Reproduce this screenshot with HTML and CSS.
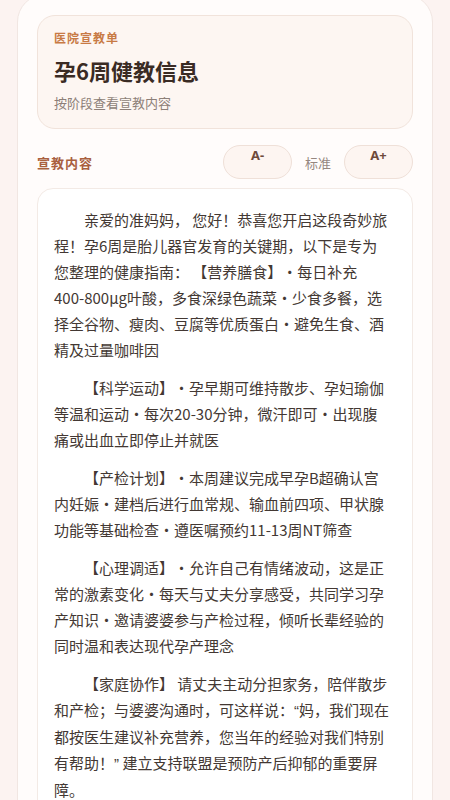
FILE: index.html
```html
<!DOCTYPE html>
<html lang="zh-CN">
<head>
<meta charset="utf-8">
<meta name="viewport" content="width=device-width, initial-scale=1">
<title>孕6周健教信息</title>
<link rel="stylesheet" href="styles.css">
</head>
<body>
<div class="page">
  <div class="shell">
    <header class="hero">
      <div class="hero-label">医院宣教单</div>
      <h1 class="hero-title">孕6周健教信息</h1>
      <div class="hero-sub">按阶段查看宣教内容</div>
    </header>

    <div class="section-row">
      <div class="section-title">宣教内容</div>
      <div class="font-ctrl">
        <span class="pill">A-</span>
        <span class="font-state">标准</span>
        <span class="pill">A+</span>
      </div>
    </div>

    <article class="content">
      <p>亲爱的准妈妈， 您好！恭喜您开启这段奇妙旅程！孕6周是胎儿器官发育的关键期，以下是专为您整理的健康指南： 【营养膳食】・每日补充<span class="nowrap">400-800μg</span>叶酸，多食深绿色蔬菜・少食多餐，选择全谷物、瘦肉、豆腐等优质蛋白・避免生食、酒精及过量咖啡因</p>
      <p>【科学运动】・孕早期可维持散步、孕妇瑜伽等温和运动・每次20-30分钟，微汗即可・出现腹痛或出血立即停止并就医</p>
      <p>【产检计划】・本周建议完成早孕B超确认宫内妊娠・建档后进行血常规、输血前四项、甲状腺功能等基础检查・遵医嘱预约11-13周NT筛查</p>
      <p>【心理调适】・允许自己有情绪波动，这是正常的激素变化・每天与丈夫分享感受，共同学习孕产知识・邀请婆婆参与产检过程，倾听长辈经验的同时温和表达现代孕产理念</p>
      <p>【家庭协作】 请丈夫主动分担家务，陪伴散步和产检；与婆婆沟通时，可这样说：<span class="quote">“</span>妈，我们现在都按医生建议补充营养，您当年的经验对我们特别有帮助！<span class="quote">”</span> 建立支持联盟是预防产后抑郁的重要屏障。</p>
    </article>
  </div>
</div>
</body>
</html>
```

FILE: styles.css
```css
* { box-sizing: border-box; }

html, body {
  margin: 0;
  padding: 0;
  background: #fcf3f1;
}

body {
  font-family: "Noto Sans CJK SC", "Noto Sans", sans-serif;
  color: #3f3430;
  overflow: hidden;
  text-spacing-trim: space-all;
}

.page {
  padding: 0 17px;
}

.shell {
  margin-top: -6px;
  background: #fffcfb;
  border: 1px solid #f1e6e2;
  border-radius: 28px;
  padding: 20px 19px 20px 19px;
  min-height: 900px;
}

.hero {
  background: #fdf6f2;
  border: 1px solid #f1e3db;
  border-radius: 18px;
  padding: 14px 16px 16px 16px;
}

.hero-label {
  font-size: 12px;
  line-height: 16px;
  font-weight: 700;
  letter-spacing: 1px;
  color: #c87a45;
}

.hero-title {
  margin: 10px 0 0 0;
  font-size: 22px;
  line-height: 28px;
  font-weight: 700;
  color: #3a2b24;
}

.hero-sub {
  margin-top: 10px;
  font-size: 13px;
  line-height: 18px;
  color: #8d7f78;
}

.section-row {
  display: flex;
  align-items: center;
  justify-content: space-between;
  margin-top: 16px;
}

.section-title {
  font-size: 13px;
  font-weight: 700;
  letter-spacing: 1px;
  color: #a9603f;
}

.font-ctrl {
  display: flex;
  align-items: center;
  gap: 13px;
}

.pill {
  display: block;
  width: 69px;
  height: 34px;
  border: 1px solid #efe0d8;
  border-radius: 17px;
  background: #fdf5f1;
  text-align: center;
  font-size: 13px;
  line-height: 18px;
  padding-top: 0;
  font-weight: 700;
  color: #6d4a3b;
  font-family: "Noto Sans", "Noto Sans CJK SC", sans-serif;
}

.font-state {
  font-size: 13px;
  color: #958780;
}

.content {
  margin-top: 9px;
  background: #ffffff;
  border: 1px solid #f3eae5;
  border-radius: 16px;
  padding: 18px 20px 18px 16px;
}

.content p {
  margin: 0 0 12px 0;
  font-size: 15px;
  line-height: 26px;
  text-indent: 2em;
  color: #433833;
}

.nowrap {
  display: inline-block;
  white-space: nowrap;
  text-indent: 0;
  line-height: 26px;
  vertical-align: top;
}

.quote {
  font-family: "Liberation Sans", sans-serif;
}
```
